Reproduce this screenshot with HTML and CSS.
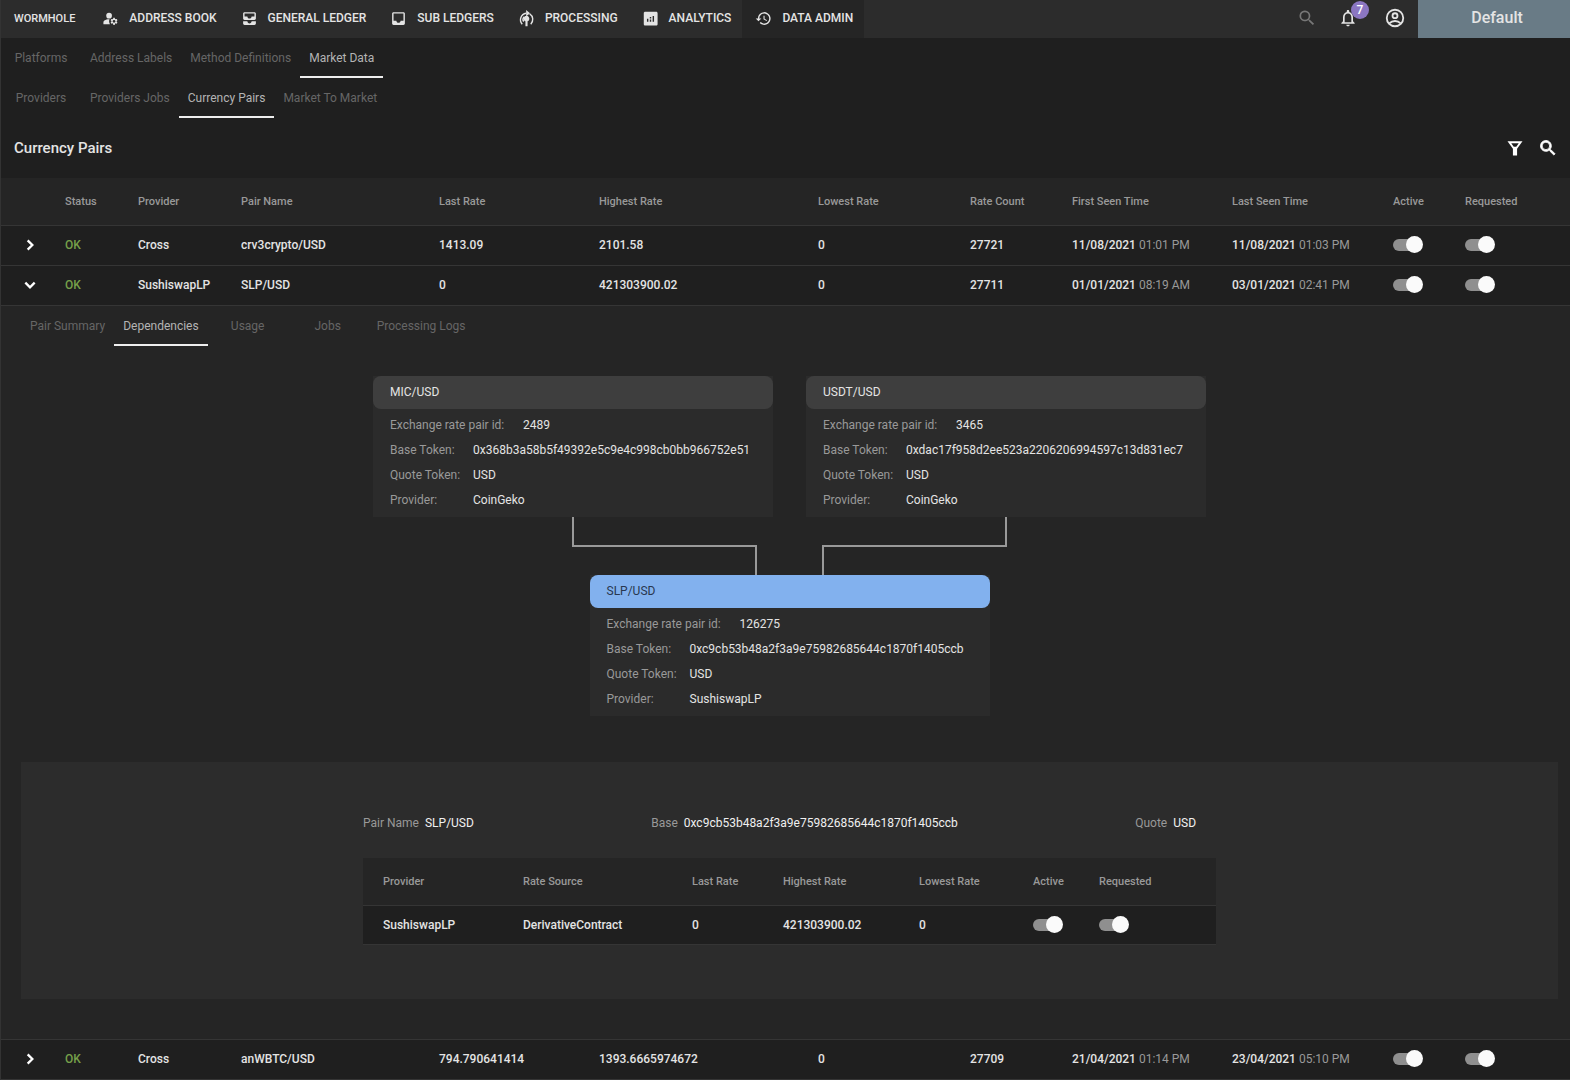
FILE: index.html
```html
<!DOCTYPE html>
<html lang="en">
<head>
<meta charset="utf-8">
<title>Currency Pairs</title>
<link rel="stylesheet" href="styles.css">
</head>
<body>
<header class="topbar">
  <a class="brand" href="#">WORMHOLE</a>
  <nav class="main-nav">
    <a class="nav-item" href="#"><svg class="icon" viewBox="0 0 24 24"><circle cx="10" cy="8" r="4"/><path d="M10.67 13.02C10.45 13.01 10.23 13 10 13c-2.42 0-4.68.67-6.61 1.82C2.51 15.34 2 16.32 2 17.35V20h9.26C10.47 18.87 10 17.49 10 16c0-1.07.25-2.07.67-2.98z"/><path d="M20.75 16c0-.22-.03-.42-.06-.63l1.14-1.01-1-1.73-1.45.49c-.32-.27-.68-.48-1.08-.63L18 11h-2l-.3 1.49c-.4.15-.76.36-1.08.63l-1.45-.49-1 1.73 1.14 1.01c-.03.21-.06.41-.06.63s.03.42.06.63l-1.14 1.01 1 1.73 1.45-.49c.32.27.68.48 1.08.63L16 21h2l.3-1.49c.4-.15.76-.36 1.08-.63l1.45.49 1-1.73-1.14-1.01c.03-.21.06-.41.06-.63zM17 18c-1.1 0-2-.9-2-2s.9-2 2-2 2 .9 2 2-.9 2-2 2z"/></svg>ADDRESS BOOK</a>
    <a class="nav-item" href="#"><svg class="icon" viewBox="0 0 24 24"><path d="M19 3H5c-1.1 0-2 .9-2 2v7c0 1.1.9 2 2 2h14c1.1 0 2-.9 2-2V5c0-1.1-.9-2-2-2zm0 6h-4c0 1.62-1.38 3-3 3s-3-1.38-3-3H5V5h14v4zm-4 7h6v3c0 1.1-.9 2-2 2H5c-1.1 0-2-.9-2-2v-3h6c0 1.66 1.34 3 3 3s3-1.34 3-3z"/></svg>GENERAL LEDGER</a>
    <a class="nav-item" href="#"><svg class="icon" viewBox="0 0 24 24"><path d="M19 3H4.99c-1.11 0-1.98.89-1.98 2L3 19c0 1.1.88 2 1.99 2H19c1.1 0 2-.9 2-2V5c0-1.11-.9-2-2-2zm0 12h-4c0 1.66-1.35 3-3 3s-3-1.34-3-3H4.99V5H19v10z"/></svg>SUB LEDGERS</a>
    <a class="nav-item" href="#"><svg class="icon" viewBox="0 0 24 24"><path d="M10.500 23v-7a4 4 0 1 1 3 0v7zM11.500 0l5.500 4.500-5.500 4.500z"/><path class="line" d="M6 20a9.300 9.300 0 0 1 5.500-15.500M18 20a9.300 9.300 0 0 0-1.500-14.500M8 16.500a5.500 5.500 0 0 1 1-7"/></svg>PROCESSING</a>
    <a class="nav-item" href="#"><svg class="icon" viewBox="0 0 24 24"><path d="M20 2.500H4.500c-1.100 0-2 .9-2 2V20c0 1.100.9 2 2 2H20c1.100 0 2-.9 2-2V4.500c0-1.100-.9-2-2-2zM9 16.500H7v-4h2v4zm4 0h-2v-3h2v3zm0-4.500h-2v-2h2v2zm4 4.500h-2v-8h2v8z"/></svg>ANALYTICS</a>
    <a class="nav-item active" href="#"><svg class="icon" viewBox="0 0 24 24"><path d="M13 3a9 9 0 0 0-9 9H1l3.900 3.900L9 12H6a7 7 0 1 1 2.060 4.940l-1.420 1.420A9 9 0 1 0 13 3zm-1 5v5l4.280 2.540.72-1.210-3.500-2.080V8z"/></svg>DATA ADMIN</a>
  </nav>
  <div class="top-actions">
    <button class="icon-btn dim" type="button" aria-label="Search"><svg class="icon-lg" viewBox="0 0 24 24"><path d="M15.500 14h-.79l-.28-.27A6.500 6.500 0 1 0 13.730 14.430l.27.28v.79l5 4.990L20.490 19zM9.500 14a4.500 4.500 0 1 1 0-9 4.500 4.500 0 0 1 0 9z"/></svg></button>
    <button class="icon-btn" type="button" aria-label="Notifications"><svg class="icon-lg" viewBox="0 0 24 24"><path d="M12 22c1.100 0 2-.9 2-2h-4c0 1.100.9 2 2 2zm6-6v-5c0-3.070-1.630-5.640-4.500-6.320V4c0-.83-.67-1.500-1.500-1.500s-1.500.67-1.500 1.500v.68C7.640 5.360 6 7.920 6 11v5l-2 2v1h16v-1l-2-2zm-2 1H8v-6c0-2.480 1.510-4.500 4-4.500s4 2.020 4 4.500v6z"/></svg><span class="badge">7</span></button>
    <button class="icon-btn account" type="button" aria-label="Account"><svg class="icon-xl" viewBox="0 0 24 24"><g class="line"><circle cx="12" cy="12" r="9"/><circle cx="12" cy="9.500" r="2.700"/><path d="M5.800 17.800c3.400-3.400 9-3.400 12.400 0"/></g></svg></button>
  </div>
  <button class="workspace" type="button">Default</button>
</header>

<nav class="tabs">
  <a class="tab" href="#">Platforms</a><a class="tab" href="#">Address Labels</a><a class="tab" href="#">Method Definitions</a><a class="tab active" href="#">Market Data</a>
</nav>
<nav class="tabs">
  <a class="tab" href="#">Providers</a><a class="tab" href="#">Providers Jobs</a><a class="tab active" href="#">Currency Pairs</a><a class="tab" href="#">Market To Market</a>
</nav>

<main>
  <div class="title-bar">
    <h1>Currency Pairs</h1>
    <div class="title-actions">
      <button class="icon-btn" type="button" aria-label="Filter"><svg class="icon-lg" viewBox="0 0 24 24"><path d="M3 4h18l-6.500 9v8h-5v-8zM7.500 6.200l3 4.300h3l3-4.300z" fill-rule="evenodd"/></svg></button>
      <button class="icon-btn" type="button" aria-label="Search pairs"><svg class="icon-lg bold" viewBox="0 0 24 24"><path d="M15.500 14h-.79l-.28-.27A6.500 6.500 0 1 0 13.730 14.430l.27.28v.79l5 4.990L20.490 19zM9.500 14a4.500 4.500 0 1 1 0-9 4.500 4.500 0 0 1 0 9z"/></svg></button>
    </div>
  </div>

  <table class="pairs">
    <colgroup><col class="c-toggle"><col class="c-status"><col class="c-provider"><col class="c-pair"><col class="c-last"><col class="c-high"><col class="c-low"><col class="c-count"><col class="c-first"><col class="c-seen"><col class="c-active"><col class="c-req"></colgroup>
    <thead>
      <tr><th></th><th>Status</th><th>Provider</th><th>Pair Name</th><th>Last Rate</th><th>Highest Rate</th><th>Lowest Rate</th><th>Rate Count</th><th>First Seen Time</th><th>Last Seen Time</th><th>Active</th><th>Requested</th></tr>
    </thead>
    <tbody>
      <tr class="pair-row">
        <td><button class="expander" type="button" aria-label="Expand"><svg class="chevron" viewBox="0 0 12 12"><path d="M4 2l4 4-4 4"/></svg></button></td>
        <td class="ok">OK</td><td>Cross</td><td>crv3crypto/USD</td><td>1413.09</td><td>2101.58</td><td>0</td><td>27721</td>
        <td>11/08/2021 <span class="time">01:01 PM</span></td><td>11/08/2021 <span class="time">01:03 PM</span></td>
        <td><input class="switch" type="checkbox" checked aria-label="Active"></td><td><input class="switch" type="checkbox" checked aria-label="Requested"></td>
      </tr>
      <tr class="pair-row">
        <td><button class="expander" type="button" aria-label="Collapse"><svg class="chevron" viewBox="0 0 12 12"><path d="M2 4l4 4 4-4"/></svg></button></td>
        <td class="ok">OK</td><td>SushiswapLP</td><td>SLP/USD</td><td>0</td><td>421303900.02</td><td>0</td><td>27711</td>
        <td>01/01/2021 <span class="time">08:19 AM</span></td><td>03/01/2021 <span class="time">02:41 PM</span></td>
        <td><input class="switch" type="checkbox" checked aria-label="Active"></td><td><input class="switch" type="checkbox" checked aria-label="Requested"></td>
      </tr>
      <tr class="detail-row">
        <td colspan="12">
          <div class="detail">
            <nav class="tabs">
              <a class="tab" href="#">Pair Summary</a><a class="tab active" href="#">Dependencies</a><a class="tab" href="#">Usage</a><a class="tab" href="#">Jobs</a><a class="tab" href="#">Processing Logs</a>
            </nav>
            <div class="graph">
              <div class="parents">
                <section class="card">
                  <h2>MIC/USD</h2>
                  <dl>
                    <div><dt class="wide">Exchange rate pair id:</dt><dd>2489</dd></div>
                    <div><dt>Base Token:</dt><dd>0x368b3a58b5f49392e5c9e4c998cb0bb966752e51</dd></div>
                    <div><dt>Quote Token:</dt><dd>USD</dd></div>
                    <div><dt>Provider:</dt><dd>CoinGeko</dd></div>
                  </dl>
                </section>
                <section class="card">
                  <h2>USDT/USD</h2>
                  <dl>
                    <div><dt class="wide">Exchange rate pair id:</dt><dd>3465</dd></div>
                    <div><dt>Base Token:</dt><dd>0xdac17f958d2ee523a2206206994597c13d831ec7</dd></div>
                    <div><dt>Quote Token:</dt><dd>USD</dd></div>
                    <div><dt>Provider:</dt><dd>CoinGeko</dd></div>
                  </dl>
                </section>
              </div>
              <svg class="links" viewBox="0 0 833 58"><path d="M200 0V29H383V58M633 0V29H450V58"/></svg>
              <section class="card current">
                <h2>SLP/USD</h2>
                <dl>
                  <div><dt class="wide">Exchange rate pair id:</dt><dd>126275</dd></div>
                  <div><dt>Base Token:</dt><dd>0xc9cb53b48a2f3a9e75982685644c1870f1405ccb</dd></div>
                  <div><dt>Quote Token:</dt><dd>USD</dd></div>
                  <div><dt>Provider:</dt><dd>SushiswapLP</dd></div>
                </dl>
              </section>
            </div>
            <section class="panel">
              <div class="panel-inner">
                <div class="facts">
                  <p><span>Pair Name</span>SLP/USD</p>
                  <p><span>Base</span>0xc9cb53b48a2f3a9e75982685644c1870f1405ccb</p>
                  <p><span>Quote</span>USD</p>
                </div>
                <table class="sources">
                  <colgroup><col class="s-provider"><col class="s-source"><col class="s-last"><col class="s-high"><col class="s-low"><col class="s-active"><col class="s-req"></colgroup>
                  <thead><tr><th>Provider</th><th>Rate Source</th><th>Last Rate</th><th>Highest Rate</th><th>Lowest Rate</th><th>Active</th><th>Requested</th></tr></thead>
                  <tbody><tr><td>SushiswapLP</td><td>DerivativeContract</td><td>0</td><td>421303900.02</td><td>0</td><td><input class="switch" type="checkbox" checked aria-label="Active"></td><td><input class="switch" type="checkbox" checked aria-label="Requested"></td></tr></tbody>
                </table>
              </div>
            </section>
          </div>
        </td>
      </tr>
      <tr class="pair-row">
        <td><button class="expander" type="button" aria-label="Expand"><svg class="chevron" viewBox="0 0 12 12"><path d="M4 2l4 4-4 4"/></svg></button></td>
        <td class="ok">OK</td><td>Cross</td><td>anWBTC/USD</td><td>794.790641414</td><td>1393.6665974672</td><td>0</td><td>27709</td>
        <td>21/04/2021 <span class="time">01:14 PM</span></td><td>23/04/2021 <span class="time">05:10 PM</span></td>
        <td><input class="switch" type="checkbox" checked aria-label="Active"></td><td><input class="switch" type="checkbox" checked aria-label="Requested"></td>
      </tr>
    </tbody>
  </table>
</main>
</body>
</html>
```
FILE: styles.css
```css
* { box-sizing: border-box; }

body {
  margin: 0;
  border-left: 1px solid #333;
  background: #1f1f1f;
  color: #e4e4e4;
  font: 400 12px/16px Roboto, "Liberation Sans", sans-serif;
}

a { color: inherit; text-decoration: none; }

button {
  border: 0;
  padding: 0;
  background: none;
  color: inherit;
  font: inherit;
}

svg { display: block; fill: currentColor; }
.line { fill: none; stroke: currentColor; stroke-width: 2; }

/* Top bar */
.topbar {
  display: flex;
  height: 38px;
  background: #2c2c2c;
  font-weight: 500;
}
.brand { padding: 11px 14px 11px 13px; font-size: 11px; }
.main-nav { display: flex; }
.nav-item {
  display: flex;
  align-items: center;
  gap: 10px;
  padding: 0 11px 2px 13px;
  white-space: nowrap;
}
.nav-item.active { background: #252525; }
.icon { width: 17px; height: 17px; }
.icon-lg { width: 20px; height: 20px; }
.icon-xl { width: 22px; height: 22px; }
.bold { stroke: currentColor; }
.top-actions {
  display: flex;
  align-items: center;
  gap: 21px;
  margin-left: auto;
  padding: 0 12px 2px 0;
}
.icon-btn { position: relative; }
.icon-btn.dim { color: #777; }
.account { margin-left: 5px; }
.badge {
  position: absolute;
  top: -7px;
  left: 13px;
  width: 18px;
  border-radius: 9px;
  background: #8b76c2;
  color: #fff;
  line-height: 18px;
}
.workspace {
  width: 152px;
  padding: 0 0 2px 6px;
  background: #697b86;
  font-size: 16px;
}

/* Tabs */
.tabs { display: flex; }
.tab {
  min-width: 80px;
  height: 40px;
  padding: 12px 9px 10px;
  border-bottom: 2px solid transparent;
  color: #666;
  text-align: center;
}
.tab.active { border-color: #eee; color: #b4b4b4; }

/* Page title */
.title-bar {
  display: flex;
  align-items: center;
  justify-content: space-between;
  height: 60px;
  padding: 0 12px 0 13px;
}
h1 { margin: 0; font-size: 15px; font-weight: 500; }
.title-actions { display: flex; gap: 13px; color: #fff; }

/* Tables */
table {
  width: 100%;
  border-collapse: separate;
  border-spacing: 0;
  table-layout: fixed;
  font-weight: 500;
}
th, td { padding: 0; border-bottom: 1px solid #353535; text-align: left; }
th {
  height: 48px;
  background: #252525;
  color: #999;
  font-size: 11px;
  font-weight: 500;
}
.pair-row > td { height: 40px; padding-bottom: 2px; }
.ok { color: #76a04a; }
.time { color: #999; font-weight: 400; }

.c-toggle { width: 64px; }
.c-status { width: 73px; }
.c-provider { width: 103px; }
.c-pair { width: 198px; }
.c-last { width: 160px; }
.c-high { width: 219px; }
.c-low { width: 152px; }
.c-count { width: 102px; }
.c-first { width: 160px; }
.c-seen { width: 161px; }
.c-active { width: 72px; }
.c-req { width: 105px; }

.expander { display: block; margin-left: 22px; color: #fff; }
.chevron {
  width: 14px;
  height: 14px;
  fill: none;
  stroke: currentColor;
  stroke-width: 2;
}

.switch {
  display: block;
  appearance: none;
  position: relative;
  width: 30px;
  height: 18px;
  margin: 0;
}
.switch::before {
  content: "";
  display: block;
  width: 26px;
  height: 12px;
  margin-top: 3px;
  border-radius: 6px;
  background: #8f8f8f;
}
.switch::after {
  content: "";
  position: absolute;
  top: 0;
  right: 0;
  width: 17px;
  height: 17px;
  border-radius: 50%;
  background: #fafafa;
}

/* Expanded pair */
.detail-row td { background: #252525; }
.detail { padding: 0 12px 40px 20px; font-weight: 400; }
.graph {
  display: flex;
  flex-direction: column;
  align-items: center;
  padding: 30px 0 46px;
}
.parents { display: flex; gap: 33px; }
.card { width: 400px; background: #2b2b2b; }
.card h2 {
  margin: 0;
  padding: 0 17px;
  border-radius: 8px;
  background: #3e3e3e;
  font-size: 12px;
  font-weight: 400;
  line-height: 33px;
}
.card.current h2 { background: #82b1ee; color: #28384f; }
.card dl { margin: 0; padding: 4px 17px; }
.card dl div { display: flex; line-height: 25px; }
.card dt { width: 83px; color: #999; }
.card dt.wide { width: 133px; }
.card dd { margin: 0; }
.links {
  width: 833px;
  height: 58px;
  fill: none;
  stroke: #999;
  stroke-width: 2;
}

.panel { padding: 53px 20px 54px; background: #2c2c2c; }
.panel-inner { max-width: 853px; margin: 0 auto; }
.facts {
  display: flex;
  justify-content: space-between;
  padding: 0 20px 27px 0;
}
.facts p { margin: 0; color: #f0f0f0; }
.facts span { margin-right: 6px; color: #999; }

.sources td { height: 39px; }
.detail-row .sources td { background: #1f1f1f; }
.sources th:first-child, .sources td:first-child { padding-left: 20px; }
.s-provider { width: 160px; }
.s-source { width: 169px; }
.s-last { width: 91px; }
.s-high { width: 136px; }
.s-low { width: 114px; }
.s-active { width: 66px; }
.s-req { width: 117px; }
```
